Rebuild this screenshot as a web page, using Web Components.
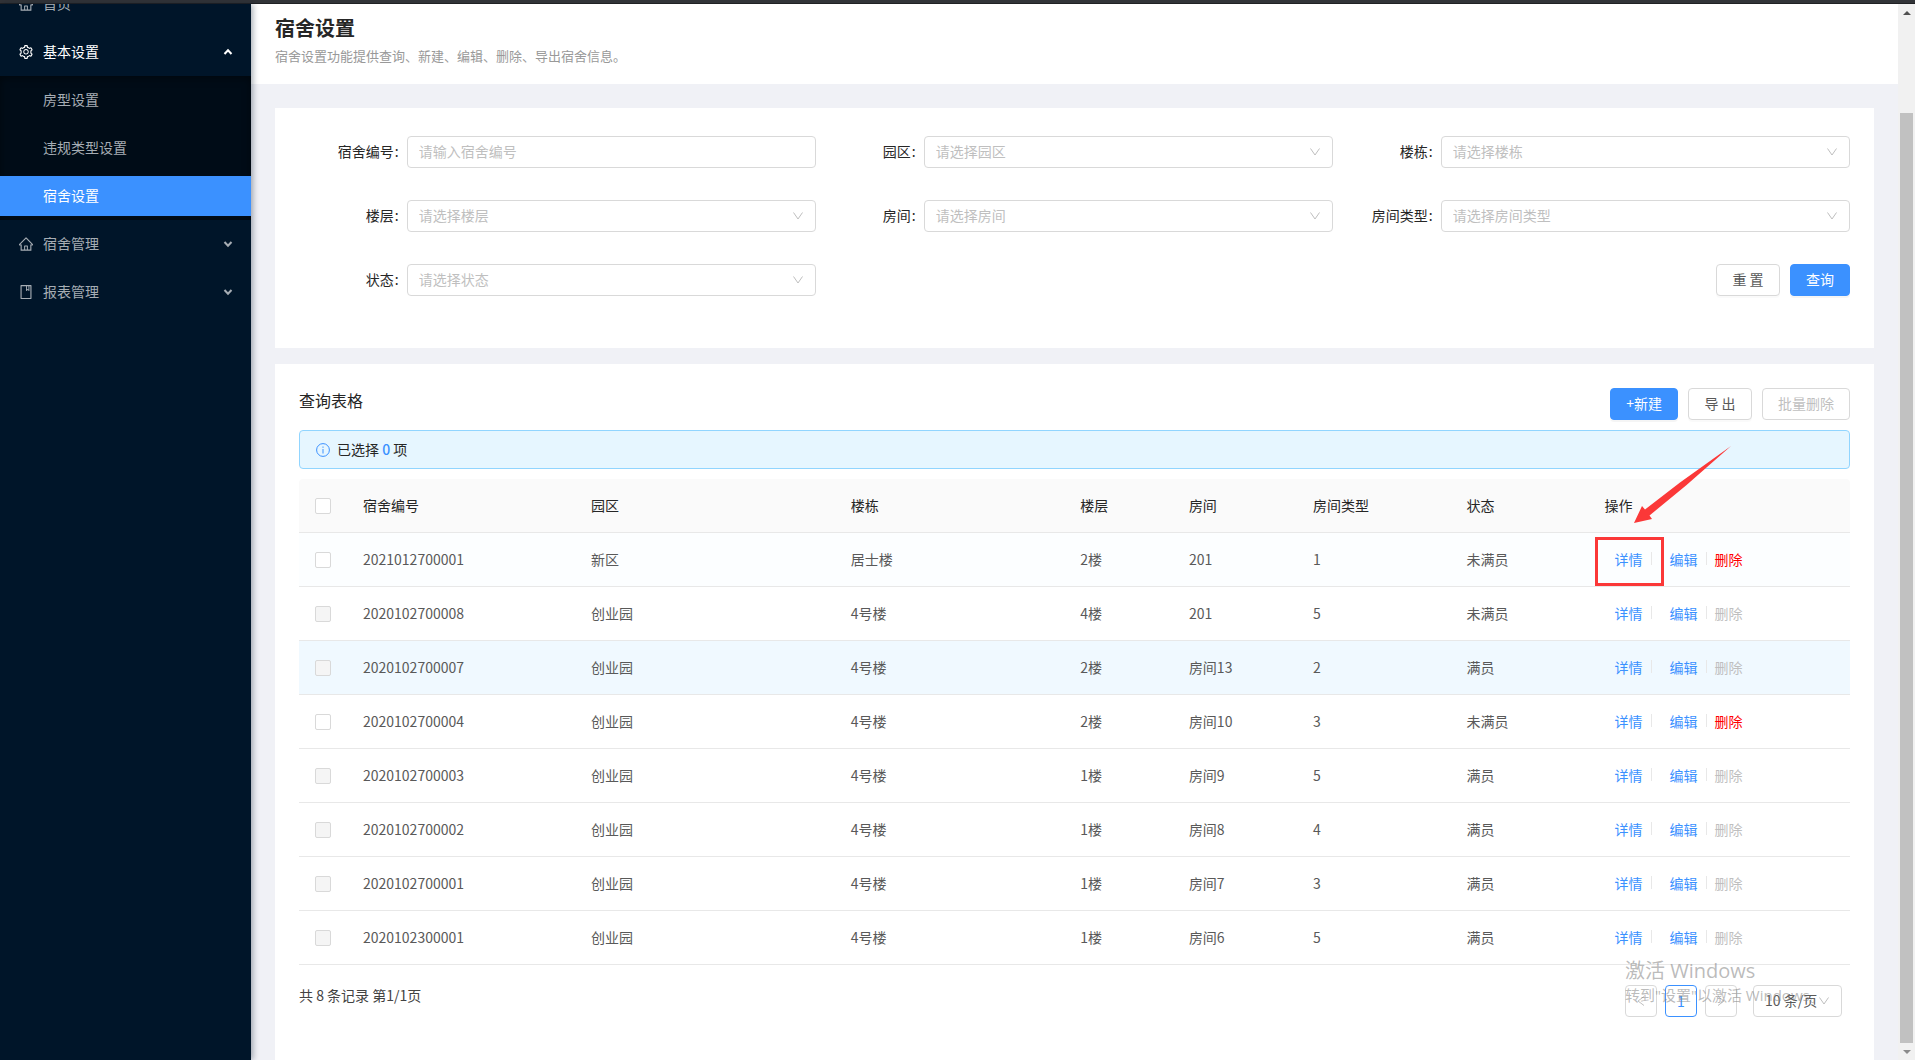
<!DOCTYPE html>
<html lang="zh-CN">
<head>
<meta charset="utf-8">
<title>宿舍设置</title>
<style>
  html, body { height: 100%; margin: 0; }
  body {
    overflow: hidden;
    font: 14px/22px "Noto Sans CJK SC", sans-serif;
    color: #595959;
    --primary: #3b91ff;
    --heading: #262626;
    --border: #d9d9d9;
    --hint: #bfbfbf;
    --line: #e8e8e8;
  }
</style>
</head>
<body>
<dorm-app></dorm-app>

<script>
const ICONS = {
  home: 'M946.5 505L560.1 118.8l-25.9-25.9a31.5 31.5 0 0 0-44.4 0L77.5 505a63.9 63.9 0 0 0-18.8 46c.4 35.2 29.7 63.3 64.9 63.3h42.5V940h691.8V614.3h43.4c17.1 0 33.2-6.7 45.3-18.8a63.6 63.6 0 0 0 18.7-45.3c0-17-6.7-33.1-18.8-45.2zM568 868H456V664h112v204zm217.9-325.7V868H632V640c0-22.1-17.9-40-40-40H432c-22.1 0-40 17.9-40 40v228H238.1V542.3h-96l370-369.7 23.1 23.1L882 542.3h-96.1z',
  book: 'M832 64H192c-17.7 0-32 14.3-32 32v832c0 17.7 14.3 32 32 32h640c17.7 0 32-14.3 32-32V96c0-17.7-14.3-32-32-32zm-260 72h96v209.9L621.5 312 572 347.4V136zm220 752H232V136h280v296.9c0 3.3 1 6.6 3 9.3a15.9 15.9 0 0 0 22.3 3.7l83.8-59.9 81.4 59.4c2.7 2 6 3.1 9.4 3.1 8.8 0 16-7.2 16-16V136h64v752z',
  setting: 'M924.8 625.7l-65.5-56c3.1-19 4.7-38.4 4.7-57.8s-1.6-38.8-4.7-57.8l65.5-56a32.03 32.03 0 0 0 9.3-35.2l-.9-2.6a443.74 443.74 0 0 0-79.7-137.9l-1.8-2.1a32.12 32.12 0 0 0-35.1-9.5l-81.3 28.9c-30-24.6-63.5-44-99.7-57.6l-15.7-85a32.05 32.05 0 0 0-25.8-25.7l-2.7-.5c-52.1-9.4-106.9-9.4-159 0l-2.7.5a32.05 32.05 0 0 0-25.8 25.7l-15.8 85.4a351.86 351.86 0 0 0-99 57.4l-81.9-29.1a32 32 0 0 0-35.1 9.5l-1.8 2.1a446.02 446.02 0 0 0-79.7 137.9l-.9 2.6c-4.5 12.5-.8 26.5 9.3 35.2l66.3 56.6c-3.1 18.8-4.6 38-4.6 57.1 0 19.2 1.5 38.4 4.6 57.1L99 625.5a32.03 32.03 0 0 0-9.3 35.2l.9 2.6c18.1 50.4 44.9 96.9 79.7 137.9l1.8 2.1a32.12 32.12 0 0 0 35.1 9.5l81.9-29.1c29.8 24.5 63.1 43.9 99 57.4l15.8 85.4a32.05 32.05 0 0 0 25.8 25.7l2.7.5a449.4 449.4 0 0 0 159 0l2.7-.5a32.05 32.05 0 0 0 25.8-25.7l15.7-85a350 350 0 0 0 99.7-57.6l81.3 28.9a32 32 0 0 0 35.1-9.5l1.8-2.1c34.8-41.1 61.6-87.5 79.7-137.9l.9-2.6c4.5-12.3.8-26.3-9.3-35zM788.3 465.9c2.5 15.1 3.8 30.6 3.8 46.1s-1.3 31-3.8 46.1l-6.6 40.1 74.7 63.9a370.03 370.03 0 0 1-42.6 73.6L721 702.8l-31.4 25.8c-23.9 19.6-50.5 35-79.3 45.8l-38.1 14.3-17.9 97a377.5 377.5 0 0 1-85 0l-17.9-97.2-37.8-14.5c-28.5-10.8-55-26.2-78.7-45.7l-31.4-25.9-93.4 33.2c-17-22.9-31.2-47.6-42.6-73.6l75.5-64.5-6.5-40c-2.4-14.9-3.7-30.3-3.7-45.5 0-15.3 1.2-30.6 3.7-45.5l6.5-40-75.5-64.5c11.3-26.1 25.6-50.7 42.6-73.6l93.4 33.2 31.4-25.9c23.7-19.5 50.2-34.9 78.7-45.7l37.9-14.3 17.9-97.2c28.1-3.2 56.8-3.2 85 0l17.9 97 38.1 14.3c28.7 10.8 55.4 26.2 79.3 45.8l31.4 25.8 92.8-32.9c17 22.9 31.2 47.6 42.6 73.6L781.8 426l6.5 39.9zM512 326c-97.2 0-176 78.8-176 176s78.8 176 176 176 176-78.8 176-176-78.8-176-176-176zm79.2 255.2A111.6 111.6 0 0 1 512 614c-29.9 0-58-11.7-79.2-32.8A111.6 111.6 0 0 1 400 502c0-29.9 11.7-58 32.8-79.2C454 401.6 482.1 390 512 390c29.9 0 58 11.6 79.2 32.8A111.6 111.6 0 0 1 624 502c0 29.9-11.7 58-32.8 79.2z'
};
const define = (name, render) => customElements.define(name, class extends HTMLElement {
  connectedCallback() {
    if (this.shadowRoot) return;
    const root = this.attachShadow({ mode: 'open' });
    const tpl = document.createElement('template');
    tpl.innerHTML = render(this);
    root.append(tpl.content.cloneNode(true));
  }
});
const attr = (el, name) => el.getAttribute(name) || '';

/* Filled 14px glyph from the icon set */
define('ui-icon', el => `
  <style>:host{display:block;flex:none;width:14px;height:14px} svg{display:block}</style>
  <svg width="14" height="14" viewBox="64 64 896 896" fill="currentColor" aria-hidden="true"><path d="${ICONS[attr(el, 'name')]}"/></svg>`);

define('ui-button', el => `
  <style>
    :host{display:block}
    button{box-sizing:border-box;height:32px;min-width:60px;padding:0 15px 2px;font:inherit;line-height:28px;
      border:1px solid var(--border);border-radius:4px;background:#fff;color:#595959;white-space:nowrap;
      box-shadow:0 2px 0 rgba(0,0,0,.02)}
    :host([wide]) button{min-width:64px}
    :host([kind=primary]) button{background:var(--primary);border-color:var(--primary);color:#fff;box-shadow:0 2px 0 rgba(0,0,0,.04)}
    button:disabled{color:var(--hint);box-shadow:none}
  </style>
  <button type="button" ${el.hasAttribute('disabled') ? 'disabled' : ''}><slot></slot></button>`);

define('form-field', el => {
  const label = attr(el, 'label'), hint = attr(el, 'hint');
  const control = el.hasAttribute('text')
    ? `<input id="control" type="text" placeholder="${hint}">`
    : `<select id="control"><option>${hint}</option></select>
       <svg width="12" height="8" viewBox="0 0 12 8" fill="none" stroke="#bfbfbf" aria-hidden="true"><path d="M1.5 .5 6 7 10.500 .5"/></svg>`;
  return `
  <style>
    :host{display:grid;grid-template-columns:5fr 19fr;align-items:center;height:40px}
    label{justify-self:end;padding:0 8px 2px 0;color:var(--heading);white-space:nowrap}
    label::after{content:":";padding-left:1px}
    .box{display:grid;align-items:center}
    .box > *{grid-area:1/1}
    input,select{box-sizing:border-box;width:100%;height:32px;margin:0;padding:0 11px 2px;border:1px solid var(--border);
      border-radius:4px;background:#fff;font:inherit;color:var(--hint);appearance:none;outline:none}
    input::placeholder{color:var(--hint);opacity:1}
    svg{justify-self:end;margin-right:12px;pointer-events:none}
  </style>
  <label for="control">${label}</label><div class="box">${control}</div>`;
});

define('menu-item', el => `
  <style>
    :host{display:block;padding:4px 0;color:#a6adb4}
    a{display:flex;align-items:center;gap:10px;height:40px;padding:0 18px 0 19px;color:inherit;text-decoration:none}
    :host([open]){color:#fff}
    :host([sub]) a{padding-left:43px}
    :host([selected]) a{background:var(--primary);color:#fff}
    span{flex:1;padding-bottom:2px}
  </style>
  <a href="#">${attr(el, 'icon') ? `<ui-icon name="${attr(el, 'icon')}"></ui-icon>` : ''}<span><slot></slot></span>
  ${attr(el, 'arrow') ? `<svg width="10" height="8" viewBox="0 0 10 8" fill="none" stroke="currentColor" stroke-width="2" aria-hidden="true"><path d="${attr(el, 'arrow') === 'up' ? 'M1.500 6 5 2.200 8.500 6' : 'M1.500 2 5 5.800 8.500 2'}"/></svg>` : ''}
  </a>`);

define('side-menu', () => `
  <style>
    :host{display:block;flex:none;width:251px;background:#001529;overflow:hidden;z-index:1;box-shadow:2px 0 6px rgba(0,21,41,.35)}
    nav{margin-top:-24px}
    .sub{background:#000c17;box-shadow:inset 0 2px 8px rgba(0,0,0,.45)}
  </style>
  <nav>
    <menu-item icon="home">首页</menu-item>
    <menu-item icon="setting" arrow="up" open>基本设置</menu-item>
    <div class="sub">
      <menu-item sub>房型设置</menu-item>
      <menu-item sub>违规类型设置</menu-item>
      <menu-item sub selected>宿舍设置</menu-item>
    </div>
    <menu-item icon="home" arrow="down">宿舍管理</menu-item>
    <menu-item icon="book" arrow="down">报表管理</menu-item>
  </nav>`);

define('page-header', () => `
  <style>
    :host{display:block;box-sizing:border-box;height:80px;padding:8px 24px 0;background:#fff}
    h1{margin:0;font-size:20px;line-height:32px;font-weight:700;color:var(--heading)}
    p{margin:2px 0 0;font-size:13px;line-height:20px;color:#999}
  </style>
  <h1><slot name="title"></slot></h1><p><slot></slot></p>`);

define('search-form', () => `
  <style>
    :host{display:block;padding:24px 24px 48px;background:#fff}
    form{display:grid;grid-template-columns:repeat(3,1fr);row-gap:24px}
    .actions{grid-column:2/4;display:flex;justify-content:flex-end;align-items:center;gap:10px}
  </style>
  <form>
    <form-field text label="宿舍编号" hint="请输入宿舍编号"></form-field>
    <form-field label="园区" hint="请选择园区"></form-field>
    <form-field label="楼栋" hint="请选择楼栋"></form-field>
    <form-field label="楼层" hint="请选择楼层"></form-field>
    <form-field label="房间" hint="请选择房间"></form-field>
    <form-field label="房间类型" hint="请选择房间类型"></form-field>
    <form-field label="状态" hint="请选择状态"></form-field>
    <div class="actions"><ui-button wide>重 置</ui-button><ui-button kind="primary">查询</ui-button></div>
  </form>`);

define('selection-alert', () => `
  <style>
    :host{display:flex;align-items:center;gap:7px;box-sizing:border-box;height:39px;padding:0 16px;border:1px solid #91d5ff;
      border-radius:4px;background:#e6f6ff;color:var(--heading)}
    svg{flex:none}
    span{padding-bottom:2px}
  </style>
  <svg width="14" height="14" viewBox="0 0 14 14" fill="none" stroke="#3b91ff" aria-hidden="true"><circle cx="7" cy="7" r="6.400"/><path d="M7 6v4.500M7 3.500v1.300"/></svg>
  <span><slot></slot></span>`);

/* Red frame and arrow pinned over the first detail link */
define('call-out', () => `
  <style>
    :host{position:absolute;left:-20px;top:-11px;width:69px;height:49px;box-sizing:border-box;border:3px solid #fb3838;pointer-events:none}
    svg{position:absolute;left:36px;bottom:60px;overflow:visible}
  </style>
  <svg width="98" height="77" viewBox="0 0 98 77" fill="#fb3838" aria-hidden="true"><path d="M0 77 8 60 11 63.500 46 36.500 97 0 52 39.500 15.500 69.500 18 73Z"/></svg>`);

define('row-actions', el => `
  <style>
    :host{display:flex;align-items:center}
    a{text-decoration:none;color:var(--primary)}
    .first,.second{margin-left:10px}
    .first{position:relative}
    i{width:1px;height:13px;margin:0 8px;background:var(--line)}
    .del{color:#f00}
    .del[aria-disabled]{color:var(--hint)}
  </style>
  <span class="first"><a href="#">详情</a>${el.hasAttribute('marked') ? '<call-out></call-out>' : ''}</span><i></i>
  <a class="second" href="#">编辑</a><i></i>
  <a class="del" href="#" ${el.hasAttribute('locked') ? 'aria-disabled="true"' : ''}>删除</a>`);

const ROWS = [
  ['2021012700001', '新区', '居士楼', '2楼', '201', '1', '未满员', true, 'fresh'],
  ['2020102700008', '创业园', '4号楼', '4楼', '201', '5', '未满员', false, ''],
  ['2020102700007', '创业园', '4号楼', '2楼', '房间13', '2', '满员', false, 'hover'],
  ['2020102700004', '创业园', '4号楼', '2楼', '房间10', '3', '未满员', true, ''],
  ['2020102700003', '创业园', '4号楼', '1楼', '房间9', '5', '满员', false, ''],
  ['2020102700002', '创业园', '4号楼', '1楼', '房间8', '4', '满员', false, ''],
  ['2020102700001', '创业园', '4号楼', '1楼', '房间7', '3', '满员', false, ''],
  ['2020102300001', '创业园', '4号楼', '1楼', '房间6', '5', '满员', false, '']
];
define('dorm-table', () => `
  <style>
    :host{display:block}
    table{width:100%;table-layout:fixed;border-collapse:separate;border-spacing:0}
    th,td{box-sizing:border-box;height:54px;padding:0 16px 2px;text-align:left;font-weight:400;border-bottom:1px solid var(--line);white-space:nowrap}
    th:first-child,td:first-child{padding-bottom:0}
    th{background:#fafafa;color:var(--heading)}
    th:first-child{border-top-left-radius:4px}
    th:last-child{border-top-right-radius:4px}
    .fresh td{background:#fcfeff}
    .hover td{background:#f0f9ff}
    input{display:block;appearance:none;box-sizing:border-box;width:16px;height:16px;margin:0;border:1px solid var(--border);border-radius:2px;background:#fff}
    input:disabled{background:#f5f5f5}
    .c0{width:48px}.c1{width:14.700%}.c2{width:16.750%}.c3{width:14.800%}.c4{width:7%}.c5{width:8%}.c6{width:9.900%}.c7{width:8.900%}
  </style>
  <table>
    <colgroup>${[0,1,2,3,4,5,6,7,8].map(n => `<col class="c${n}">`).join('')}</colgroup>
    <thead><tr><th><input type="checkbox" aria-label="全选"></th>${['宿舍编号','园区','楼栋','楼层','房间','房间类型','状态','操作'].map(t => `<th scope="col">${t}</th>`).join('')}</tr></thead>
    <tbody>${ROWS.map((r, n) => `<tr class="${r[8]}"><td><input type="checkbox" aria-label="${r[0]}" ${r[7] ? '' : 'disabled'}></td>${r.slice(0, 7).map(t => `<td>${t}</td>`).join('')}<td><row-actions ${r[7] ? '' : 'locked'} ${n ? '' : 'marked'}></row-actions></td></tr>`).join('')}</tbody>
  </table>`);

define('page-nav', () => `
  <style>
    :host{display:flex;align-items:flex-start;justify-content:space-between;padding:20px 8px 0 0;color:#434343}
    :host > span{line-height:20px}
    .pages{position:relative;display:flex;gap:8px}
    button{box-sizing:border-box;width:32px;height:32px;padding:0;display:grid;place-items:center;border:1px solid var(--border);border-radius:4px;background:#fff;font:inherit}
    .current{border-color:var(--primary);color:var(--primary)}
    .size{display:grid;align-items:center;margin-left:8px}
    .size > *{grid-area:1/1}
    select{box-sizing:border-box;width:89px;height:32px;padding:0 11px 2px;border:1px solid var(--border);border-radius:4px;background:#fff;font:inherit;color:#595959;appearance:none}
    .size svg{justify-self:end;margin-right:12px;pointer-events:none}
  </style>
  <span>共 8 条记录 第1/1页</span>
  <div class="pages">
    <button type="button" disabled aria-label="上一页"><svg width="8" height="12" viewBox="0 0 8 12" fill="none" stroke="#bfbfbf"><path d="M7 1.500 1 6 7 10.500"/></svg></button>
    <button type="button" class="current">1</button>
    <button type="button" disabled aria-label="下一页"><svg width="8" height="12" viewBox="0 0 8 12" fill="none" stroke="#bfbfbf"><path d="M1 1.500 7 6 1 10.500"/></svg></button>
    <div class="size"><select aria-label="每页条数"><option>10 条/页</option></select>
      <svg width="12" height="8" viewBox="0 0 12 8" fill="none" stroke="#bfbfbf" aria-hidden="true"><path d="M1.500 .5 6 7 10.500 .5"/></svg></div>
    <activation-note></activation-note>
  </div>`);

/* Operating-system notice floating above the pager */
define('activation-note', () => `
  <style>
    :host{position:absolute;left:0;top:-28px;color:rgba(130,130,130,.55);pointer-events:none;white-space:nowrap;font-family:"Open Sans","Noto Sans CJK SC",sans-serif}
    p{margin:0;font-size:20px;line-height:28px}
    p + p{font-size:15px;line-height:20px}
  </style>
  <p>激活 Windows</p><p>转到"设置"以激活 Windows。</p>`);

define('result-card', () => `
  <style>
    :host{display:block;flex:1;padding:24px;background:#fff}
    header{display:flex;align-items:flex-start;gap:10px;margin-bottom:10px}
    h2{flex:1;margin:0;font-size:16px;line-height:24px;font-weight:400;color:var(--heading)}
    selection-alert{margin-bottom:10px}
    b{font-weight:500;color:var(--primary)}
  </style>
  <header><h2>查询表格</h2>
    <ui-button kind="primary">+新建</ui-button><ui-button wide>导 出</ui-button><ui-button disabled>批量删除</ui-button></header>
  <selection-alert>已选择 <b>0</b> 项</selection-alert>
  <dorm-table></dorm-table>
  <page-nav></page-nav>`);

define('scroll-rail', () => `
  <style>
    :host{display:flex;flex-direction:column;flex:none;width:17px;background:#f1f1f1}
    .end{display:grid;place-items:center;height:17px;flex:none}
    .gap{flex:92}
    .thumb{flex:931;margin:0 2px;background:#c1c1c1}
  </style>
  <div class="end"><svg width="8" height="4" viewBox="0 0 8 4" fill="#505050"><path d="M4 0 8 4H0Z"/></svg></div>
  <div class="gap"></div><div class="thumb"></div>
  <div class="end"><svg width="8" height="4" viewBox="0 0 8 4" fill="#8b8b8b"><path d="M0 0H8L4 4Z"/></svg></div>`);

define('dorm-app', () => `
  <style>
    :host{display:flex;flex-direction:column;height:100vh}
    .top{flex:none;box-sizing:border-box;height:4px;background:#323438;border-bottom:1px solid #202124}
    .body{flex:1;min-height:0;display:flex}
    main{flex:1;min-width:0;display:flex;flex-direction:column;overflow:hidden;background:#f0f1f6}
    .content{flex:1;display:flex;flex-direction:column;gap:16px;padding:24px 24px 0}
  </style>
  <div class="top"></div>
  <div class="body">
    <side-menu></side-menu>
    <main>
      <page-header><span slot="title">宿舍设置</span>宿舍设置功能提供查询、新建、编辑、删除、导出宿舍信息。</page-header>
      <div class="content"><search-form></search-form><result-card></result-card></div>
    </main>
    <scroll-rail></scroll-rail>
  </div>`);
</script>
</body>
</html>
